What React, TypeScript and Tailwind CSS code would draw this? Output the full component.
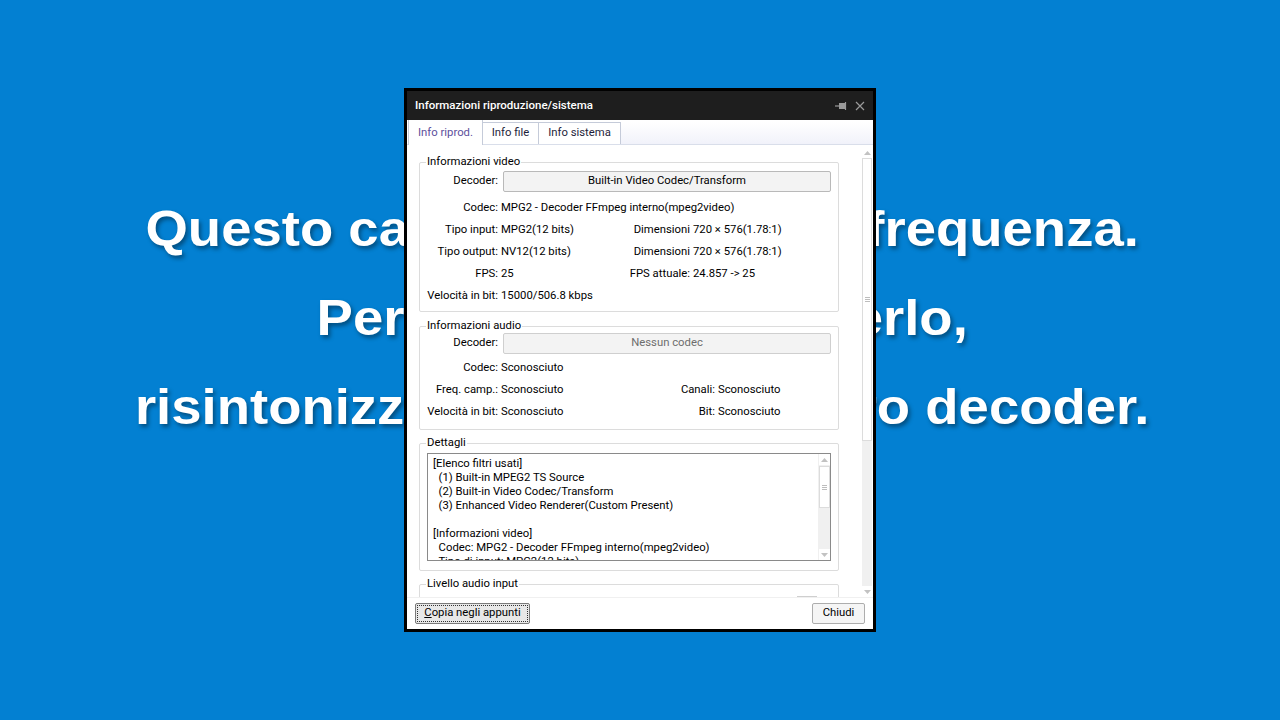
import React from 'react'

const uiFont = { fontFamily: 'Roboto, "Noto Sans", sans-serif' }

function GroupBox({ title, className, children }: { title: string; className?: string; children?: React.ReactNode }) {
  return (
    <fieldset className={`w-[420px] border border-[#dcdcdc] rounded-[2px] ${className ?? ''}`}>
      <legend className="ml-[6px] px-[1px] text-[11.3px] leading-[14px] text-black">{title}</legend>
      {children}
    </fieldset>
  )
}

function Row({ label, value, rightLabel, rightValue, leftW = 'w-[99px]', rightW = 'w-[90px]' }: {
  label: string
  value: string
  rightLabel?: string
  rightValue?: string
  leftW?: string
  rightW?: string
}) {
  return (
    <div className="flex items-center h-[22px] text-[11.3px] text-black whitespace-nowrap">
      <span className="w-[78px] shrink-0 text-right">{label}</span>
      <span className={`ml-[3px] shrink-0 ${leftW}`}>{value}</span>
      {rightLabel && (
        <>
          <span className={`${rightW} shrink-0 text-right`}>{rightLabel}</span>
          <span className="ml-[3px]">{rightValue}</span>
        </>
      )}
    </div>
  )
}

function ScrollBar({ className, thumbTop, thumbH }: { className?: string; thumbTop: number; thumbH: number }) {
  return (
    <div className={`flex flex-col bg-[#f0f0f0] ${className ?? ''}`}>
      <div className="h-[11px] flex items-center justify-center bg-white">
        <svg width="7" height="4" viewBox="0 0 7 4"><path d="M0 4 L3.5 0 L7 4 Z" fill="#c2c2c2" /></svg>
      </div>
      <div className="flex-1 relative">
        <div
          className="absolute left-0 right-0 bg-white border border-[#dcdcdc] flex items-center justify-center"
          style={{ top: thumbTop, height: thumbH }}
        >
          <div className="flex flex-col gap-[1px]">
            <div className="w-[5px] h-[1px] bg-[#bdbdbd]" />
            <div className="w-[5px] h-[1px] bg-[#bdbdbd]" />
            <div className="w-[5px] h-[1px] bg-[#bdbdbd]" />
          </div>
        </div>
      </div>
      <div className="h-[11px] flex items-center justify-center bg-white">
        <svg width="7" height="4" viewBox="0 0 7 4"><path d="M0 0 L7 0 L3.5 4 Z" fill="#c2c2c2" /></svg>
      </div>
    </div>
  )
}

const details = [
  '[Elenco filtri usati]',
  '  (1) Built-in MPEG2 TS Source',
  '  (2) Built-in Video Codec/Transform',
  '  (3) Enhanced Video Renderer(Custom Present)',
  '',
  '[Informazioni video]',
  '  Codec: MPG2 - Decoder FFmpeg interno(mpeg2video)',
  '  Tipo di input: MPG2(12 bits)',
]

export default function App() {
  return (
    <div className="relative w-full h-[720px] overflow-hidden bg-[#0380d2]">
      {/* messaggio del canale sullo sfondo */}
      <div
        className="flex flex-col items-center pt-[185px] pl-[4px] text-white font-bold text-[50px] leading-[89px] scale-x-[1.09] whitespace-nowrap [text-shadow:2px_3px_4px_rgba(0,0,0,0.4)]"
        style={{ fontFamily: '"Liberation Sans", Arial, sans-serif' }}
      >
        <div>Questo canale ha cambiato frequenza.</div>
        <div>Per continuare a vederlo,</div>
        <div>risintonizzare o usare un altro decoder.</div>
      </div>

      {/* finestra di dialogo */}
      <div
        className="absolute left-[404px] top-[88px] w-[472px] h-[544px] border-[3px] border-black bg-white flex flex-col"
        style={uiFont}
      >
        <div className="h-[29px] bg-[#1e1e1e] flex items-center pl-[8px] pr-[8px] shrink-0">
          <span className="text-white text-[11.5px] font-medium flex-1">Informazioni riproduzione/sistema</span>
          <svg width="12" height="10" viewBox="0 0 12 10" className="mr-[8px]">
            <path d="M0 5 H4" stroke="#9a9a9a" strokeWidth="1.2" />
            <rect x="4" y="2" width="6" height="6" fill="#9a9a9a" />
            <path d="M10.5 1 V9" stroke="#9a9a9a" strokeWidth="1.2" />
          </svg>
          <svg width="10" height="10" viewBox="0 0 10 10">
            <path d="M1 1 L9 9 M9 1 L1 9" stroke="#9a9a9a" strokeWidth="1.2" />
          </svg>
        </div>

        {/* schede */}
        <div className="h-[25px] shrink-0 flex items-end bg-white border-b border-[#d9deea] pl-[1px] text-[11.3px]">
          <div className="h-[25px] w-[75px] flex items-center justify-center pt-[2px] bg-white border-x border-[#c5cbd9] text-[#5c4f9c] -mb-[1px]">Info riprod.</div>
          <div className="h-[22px] w-[56px] flex items-center justify-center bg-white border-r border-t border-[#c5cbd9] text-[#1e1e3a]">Info file</div>
          <div className="h-[22px] w-[82px] flex items-center justify-center bg-white border-r border-t border-[#c5cbd9] text-[#1e1e3a]">Info sistema</div>
          <div className="flex-1 h-[22px] bg-gradient-to-b from-white to-[#f1f2fa]" />
        </div>

        {/* contenuto scorrevole */}
        <div className="flex-1 flex min-h-0">
          <div className="flex-1 overflow-hidden pt-[10px] pl-[12px]">
            <GroupBox title="Informazioni video" className="h-[157px] pt-[2px]">
              <div className="flex items-center h-[21px] text-[11.3px] text-black">
                <span className="w-[78px] text-right">Decoder:</span>
                <div className="ml-[5px] w-[328px] h-[21px] flex items-center justify-center bg-[#f3f3f3] border border-[#b9b9b9] rounded-[2px]">
                  Built-in Video Codec/Transform
                </div>
              </div>
              <div className="h-[5px]" />
              <Row label="Codec:" value="MPG2 - Decoder FFmpeg interno(mpeg2video)" leftW="" />
              <Row label="Tipo input:" value="MPG2(12 bits)" rightLabel="Dimensioni" rightValue="720 × 576(1.78:1)" />
              <Row label="Tipo output:" value="NV12(12 bits)" rightLabel="Dimensioni" rightValue="720 × 576(1.78:1)" />
              <Row label="FPS:" value="25" rightLabel="FPS attuale:" rightValue="24.857 -> 25" />
              <Row label="Velocità in bit:" value="15000/506.8 kbps" />
            </GroupBox>

            <GroupBox title="Informazioni audio" className="h-[111px] mt-[7px]">
              <div className="flex items-center h-[21px] text-[11.3px] text-black">
                <span className="w-[78px] text-right">Decoder:</span>
                <div className="ml-[5px] w-[328px] h-[21px] flex items-center justify-center bg-[#f3f3f3] border border-[#cfcfcf] rounded-[2px] text-[#6d6d6d]">
                  Nessun codec
                </div>
              </div>
              <div className="h-[3px]" />
              <Row label="Codec:" value="Sconosciuto" leftW="" />
              <Row label="Freq. camp.:" value="Sconosciuto" leftW="w-[116px]" rightLabel="Canali:" rightValue="Sconosciuto" rightW="w-[98px]" />
              <Row label="Velocità in bit:" value="Sconosciuto" leftW="w-[116px]" rightLabel="Bit:" rightValue="Sconosciuto" rightW="w-[98px]" />
            </GroupBox>

            <GroupBox title="Dettagli" className="h-[135px] mt-[6px]">
              <div className="ml-[7px] mt-[3px] w-[404px] h-[108px] border border-[#8a8a8a] flex">
                <div className="flex-1 overflow-hidden pl-[5px] pt-[3px] text-[11.3px] leading-[14px] text-black whitespace-pre">
                  {details.map((l, i) => (
                    <div key={i} className="h-[14px]">{l}</div>
                  ))}
                </div>
                <ScrollBar className="w-[12px] border-l border-[#f0f0f0]" thumbTop={1} thumbH={42} />
              </div>
            </GroupBox>

            <GroupBox title="Livello audio input" className="h-[40px] mt-[6px]">
              <div className="flex justify-end pr-[21px] pt-[5px]">
                <div className="w-[20px] h-[14px] border border-[#cfcfcf] bg-[#f3f3f3]" />
              </div>
            </GroupBox>
          </div>
          <ScrollBar className="w-[10px] mr-[1px] mt-[2px]" thumbTop={0} thumbH={283} />
        </div>

        {/* pulsanti */}
        <div className="h-[32px] shrink-0 bg-white border-t border-[#f0f0f0] flex items-center justify-between pl-[8px] pr-[8px] text-[11.3px] text-black whitespace-nowrap">
          <div className="h-[21px] w-[115px] border border-[#7a7a7a] bg-[#e8e8e8] rounded-[2px] p-[1px]">
            <div className="h-full w-full border border-dotted border-[#333] flex items-center justify-center">
              <span><span className="underline">C</span>opia negli appunti</span>
            </div>
          </div>
          <div className="h-[21px] w-[53px] border border-[#adadad] bg-[#f5f5f5] rounded-[2px] flex items-center justify-center">
            Chiudi
          </div>
        </div>
      </div>
    </div>
  )
}
